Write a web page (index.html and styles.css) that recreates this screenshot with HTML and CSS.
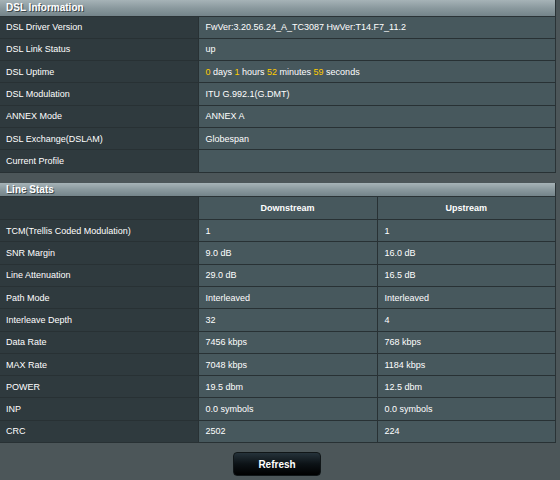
FILE: index.html
```html
<!DOCTYPE html>
<html lang="en">
	<head>
		<meta charset="UTF-8" />
		<title>DSL Log</title>
		<link rel="stylesheet" href="styles.css">
	</head>
	<body>
		<div class="page">
			<table class="info-table">
				<colgroup>
					<col class="col-label">
					<col>
				</colgroup>
				<thead>
					<tr><th colspan="2" class="section-head">DSL Information</th></tr>
				</thead>
				<tbody>
					<tr><td class="label">DSL Driver Version</td><td>FwVer:3.20.56.24_A_TC3087 HwVer:T14.F7_11.2</td></tr>
					<tr><td class="label">DSL Link Status</td><td>up</td></tr>
					<tr>
						<td class="label">DSL Uptime</td>
						<td><span class="num">0</span> days <span class="num">1</span> hours <span class="num">52</span> minutes <span class="num">59</span> seconds</td>
					</tr>
					<tr><td class="label">DSL Modulation</td><td>ITU G.992.1(G.DMT)</td></tr>
					<tr><td class="label">ANNEX Mode</td><td>ANNEX A</td></tr>
					<tr><td class="label">DSL Exchange(DSLAM)</td><td>Globespan</td></tr>
					<tr><td class="label">Current Profile</td><td></td></tr>
				</tbody>
			</table>

			<table class="info-table stats-table">
				<colgroup>
					<col class="col-label">
					<col class="col-down">
					<col>
				</colgroup>
				<thead>
					<tr><th colspan="3" class="section-head">Line Stats</th></tr>
				</thead>
				<tbody>
					<tr class="col-head"><td class="label"></td><th>Downstream</th><th>Upstream</th></tr>
					<tr><td class="label">TCM(Trellis Coded Modulation)</td><td>1</td><td>1</td></tr>
					<tr><td class="label">SNR Margin</td><td>9.0 dB</td><td>16.0 dB</td></tr>
					<tr><td class="label">Line Attenuation</td><td>29.0 dB</td><td>16.5 dB</td></tr>
					<tr><td class="label">Path Mode</td><td>Interleaved</td><td>Interleaved</td></tr>
					<tr><td class="label">Interleave Depth</td><td>32</td><td>4</td></tr>
					<tr><td class="label">Data Rate</td><td>7456 kbps</td><td>768 kbps</td></tr>
					<tr><td class="label">MAX Rate</td><td>7048 kbps</td><td>1184 kbps</td></tr>
					<tr><td class="label">POWER</td><td>19.5 dbm</td><td>12.5 dbm</td></tr>
					<tr><td class="label">INP</td><td>0.0 symbols</td><td>0.0 symbols</td></tr>
					<tr><td class="label">CRC</td><td>2502</td><td>224</td></tr>
				</tbody>
			</table>

			<div class="actions">
				<button class="button-refresh">Refresh</button>
			</div>
		</div>
	</body>
</html>
```

FILE: styles.css
```css
* {
	margin: 0;
	padding: 0;
	box-sizing: border-box;
}

body {
	background: #4c5659;
	font-family: "Liberation Sans", Arial, sans-serif;
	font-size: 9px;
	color: #ffffff;
}

.page {
	width: 556px;
}

.info-table {
	width: 100%;
	border-collapse: collapse;
	table-layout: fixed;
	border-right: 1px solid #2a3336;
}

.info-table + .info-table {
	margin-top: 10px;
}

.col-label {
	width: 198px;
}

.col-down {
	width: 179px;
}

.section-head {
	height: 16px;
	padding: 0 6px;
	text-align: left;
	font-size: 10px;
	font-weight: bold;
	text-shadow: 1px 1px 0 #3a4548;
	background: linear-gradient(to bottom, #a6b3b7 0%, #8a999e 50%, #74848a 100%);
	border-bottom: 1px solid #2a3336;
}

.stats-table .section-head {
	height: 14px;
}

.info-table td {
	height: 22.3px;
	padding: 0 7px;
	background: #47585d;
	border: 1px solid #283134;
	border-left: none;
	white-space: nowrap;
}

.info-table td.label {
	padding-left: 6px;
	background: #2f3a3e;
}

.info-table td:last-child {
	border-right: none;
}

.col-head th {
	height: 23px;
	font-weight: bold;
	text-align: center;
	background: #47585d;
	border: 1px solid #283134;
	border-left: none;
}

.col-head th:last-child {
	border-right: none;
}

.num {
	color: #ffcc00;
}

.actions {
	display: flex;
	justify-content: center;
	padding-top: 9px;
	padding-right: 2px;
}

.button-refresh {
	width: 88px;
	height: 24px;
	border: 1px solid #101618;
	border-radius: 4px;
	background: linear-gradient(to bottom, #25323a 0%, #0c1216 50%, #000000 100%);
	color: #ffffff;
	font-family: "Liberation Sans", Arial, sans-serif;
	font-size: 10px;
	font-weight: bold;
	cursor: pointer;
}
```
